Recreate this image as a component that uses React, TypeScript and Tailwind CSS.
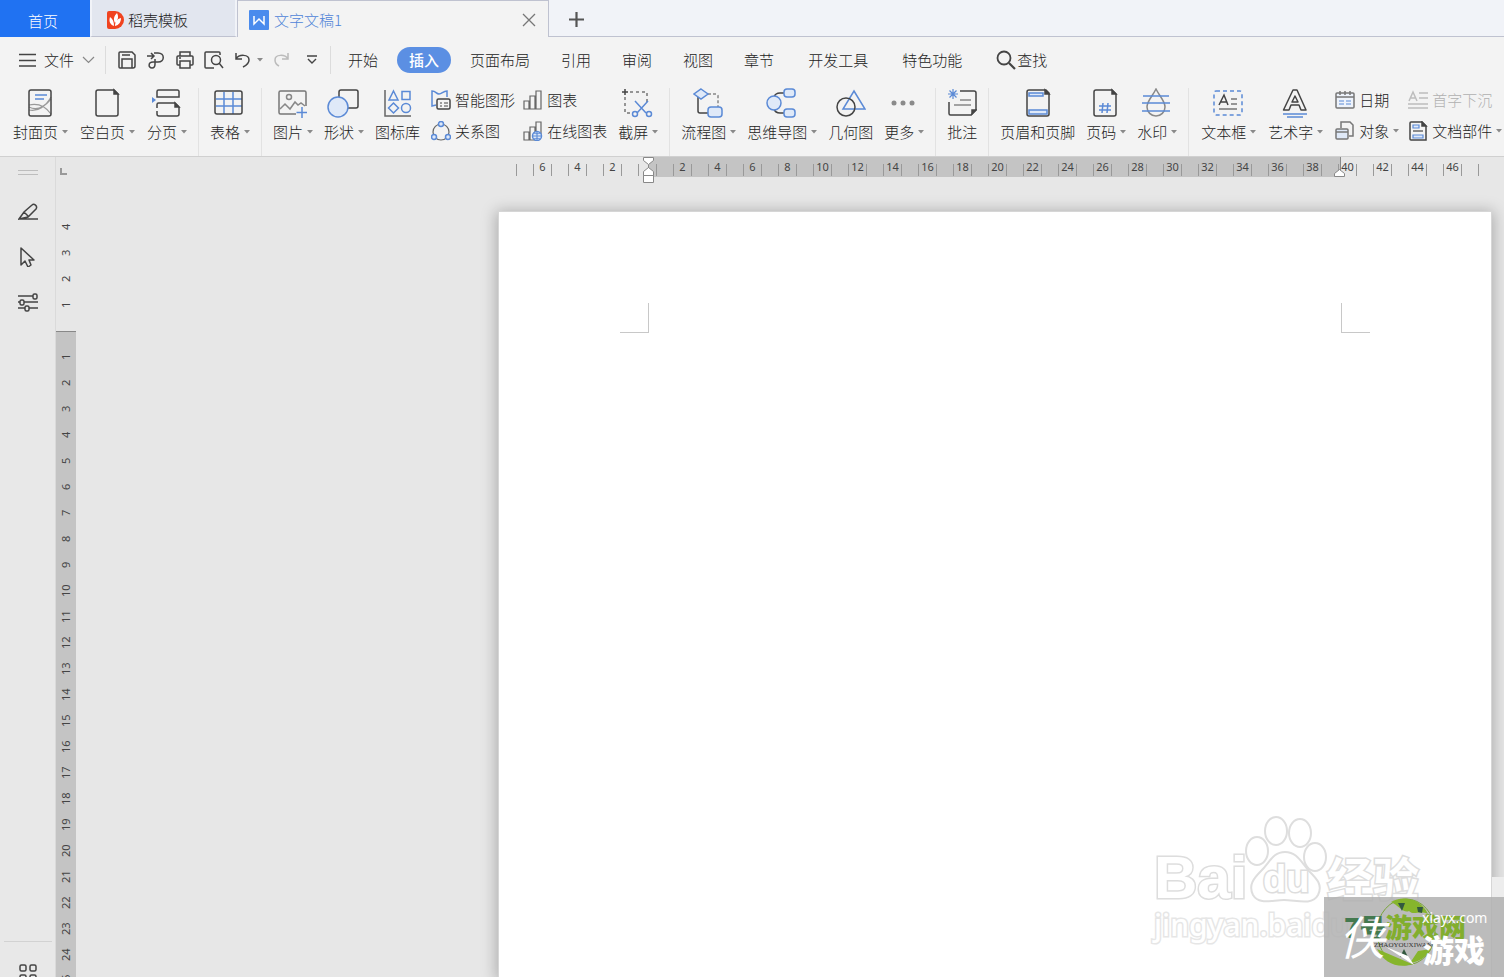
import type { ReactNode } from "react";

const DARK = "#444444";
const BLUE = "#5b8ad6";
const PALE = "#dfe9f8";

type IconProps = { w: number; h: number; children: ReactNode };

const Icon = ({ w, h, children }: IconProps) => (
  <svg
    width={w}
    height={h}
    viewBox={`0 0 ${w} ${h}`}
    fill="none"
    stroke={DARK}
    strokeWidth="1.5"
    className="shrink-0"
    aria-hidden="true"
  >
    {children}
  </svg>
);

const Caret = () => (
  <svg width="6" height="4" viewBox="0 0 6 4" className="shrink-0" aria-hidden="true">
    <path d="M0 0h6L3 3.5z" fill="#8a8a8a" />
  </svg>
);

const icons = {
  cover: (
    <Icon w={30} h={30}>
      <path d="M4 17c9-2 17 2 22 9M4 22c9 2 17-4 22-13M4 19c9 5 17-2 22-8" stroke="#999" strokeWidth="1.2" />
      <rect x="4" y="2" width="22" height="26" rx="2" />
      <path d="M10 7h12M10 11h9" stroke={BLUE} />
    </Icon>
  ),
  blank: (
    <Icon w={30} h={30}>
      <path d="M6 2h16l4 4v20a2 2 0 0 1-2 2H6a2 2 0 0 1-2-2V4a2 2 0 0 1 2-2z" />
      <path d="M22 2l4 4h-4z" fill={DARK} />
    </Icon>
  ),
  pageBreak: (
    <Icon w={30} h={30}>
      <path d="M6 9V3.500a1.500 1.500 0 0 1 1.500-1.500h19a1.500 1.500 0 0 1 1.500 1.500V9z" />
      <path d="M6 20v-3.500a1.500 1.500 0 0 1 1.500-1.500H24l4 4M6 23v3a2 2 0 0 0 2 2h18a2 2 0 0 0 2-2v-7" />
      <path d="M24 15l4 4h-4z" fill={DARK} />
      <path d="M1 9l4 3-4 3z" fill={BLUE} stroke="none" />
    </Icon>
  ),
  table: (
    <Icon w={30} h={30}>
      <path d="M10 4v22M19 4v22M2 11h26M2 18h26" stroke={BLUE} />
      <rect x="1" y="3" width="27" height="23" rx="2" />
    </Icon>
  ),
  picture: (
    <Icon w={30} h={30}>
      <path d="M19 26H3.500A1.500 1.500 0 0 1 2 24.500V4.500A1.500 1.500 0 0 1 3.500 3h24A1.500 1.500 0 0 1 29 4.500V18" stroke="#777" />
      <circle cx="12" cy="9" r="2.500" stroke="#888" />
      <path d="M3 21l5-5 5 5 5-7 3 3 3-2 4 3" stroke="#888" />
      <path d="M25 19v11M19.500 24.500h11" stroke={BLUE} />
    </Icon>
  ),
  shapes: (
    <Icon w={32} h={30}>
      <rect x="12" y="2" width="19" height="18" rx="2" />
      <circle cx="11" cy="19" r="10" fill={PALE} stroke={BLUE} />
    </Icon>
  ),
  iconLib: (
    <Icon w={30} h={30}>
      <path d="M2 2v26h26" stroke="#666" />
      <path d="M10.500 3l4.500 9H6zM19 3.500h8v8h-8zM10.500 15l5 5-5 5-5-5z" stroke={BLUE} />
      <circle cx="23" cy="20" r="4.500" stroke={BLUE} />
    </Icon>
  ),
  screenshot: (
    <Icon w={32} h={30}>
      <path d="M4 1v6M1 4h6" />
      <path d="M9 4h17v11M4 9v16h7" stroke="#777" strokeDasharray="3 3" />
      <path d="M14 13l11 12M27 13L16 25" stroke={BLUE} />
      <circle cx="14" cy="26" r="2.500" stroke={BLUE} />
      <circle cx="28" cy="26" r="2.500" stroke={BLUE} />
    </Icon>
  ),
  flow: (
    <Icon w={30} h={30}>
      <path d="M5 9v14a2 2 0 0 0 2 2h9" />
      <path d="M15 6h8a2 2 0 0 1 2 2v11" stroke="#888" strokeDasharray="3 2" />
      <path d="M8 1l7 5-7 5-7-5z" fill={PALE} stroke={BLUE} />
      <rect x="15" y="19" width="14" height="10" rx="3" fill={PALE} stroke={BLUE} />
    </Icon>
  ),
  mind: (
    <Icon w={32} h={30}>
      <path d="M9 9c1-3 3-4 6-4h5M9 21c1 3 3 4 6 4h5" />
      <circle cx="9" cy="15" r="7" fill={PALE} stroke={BLUE} />
      <rect x="19" y="1" width="11" height="8" rx="3" fill={PALE} stroke={BLUE} />
      <rect x="19" y="21" width="11" height="8" rx="3" fill={PALE} stroke={BLUE} />
    </Icon>
  ),
  geometry: (
    <Icon w={30} h={30}>
      <path d="M18 3l11 18H7z" stroke={BLUE} />
      <circle cx="10" cy="19" r="9" />
    </Icon>
  ),
  more: (
    <Icon w={30} h={30}>
      <g fill="#8a8a8a" stroke="none">
        <circle cx="6" cy="15" r="2.500" />
        <circle cx="15" cy="15" r="2.500" />
        <circle cx="24" cy="15" r="2.500" />
      </g>
    </Icon>
  ),
  comment: (
    <Icon w={30} h={30}>
      <path d="M13 3h14a2 2 0 0 1 2 2v17l-5 5H3.500A1.500 1.500 0 0 1 2 25.500V14" />
      <path d="M25 26v-4h4z" fill={DARK} />
      <path d="M13 12h11M7 17h17" stroke="#888" />
      <path d="M6 1v10M1 6h10M2.500 2.500l7 7M9.500 2.500l-7 7" stroke={BLUE} strokeWidth="1.200" />
    </Icon>
  ),
  headerFooter: (
    <Icon w={30} h={30}>
      <path d="M6 2h17l3 3v21a2 2 0 0 1-2 2H6a2 2 0 0 1-2-2V4a2 2 0 0 1 2-2z" />
      <path d="M22 2l4 4h-4z" fill={DARK} />
      <rect x="6" y="5" width="14" height="3" fill={PALE} stroke={BLUE} />
      <rect x="6" y="22" width="18" height="4" fill={PALE} stroke={BLUE} />
    </Icon>
  ),
  pageNumber: (
    <Icon w={30} h={30}>
      <path d="M6 2h16l4 4v20a2 2 0 0 1-2 2H6a2 2 0 0 1-2-2V4a2 2 0 0 1 2-2z" />
      <path d="M22 2l4 4h-4z" fill={DARK} />
      <path d="M13 15l-1 10M18 15l-1 10M9 18h12M9 22h12" stroke={BLUE} />
    </Icon>
  ),
  watermark: (
    <Icon w={30} h={30}>
      <path d="M15 1c4 8 9 12 9 18a9 9 0 0 1-18 0C6 13 11 9 15 1z" stroke="#888" />
      <path d="M2 8h26M1 15h28M1 23h28" stroke={BLUE} />
    </Icon>
  ),
  textBox: (
    <Icon w={30} h={30}>
      <rect x="1" y="3" width="28" height="24" rx="2" stroke={BLUE} strokeDasharray="4 3" />
      <path d="M6 17l5-10 4 10M8 14h6" />
      <path d="M18 11h6M18 16h6M6 21h18" stroke="#777" />
    </Icon>
  ),
  wordArt: (
    <Icon w={30} h={30}>
      <path d="M13 2h4l9 20h-5l-2-5h-8l-2 5H3.500zM15 8l-3 6h6z" strokeLinejoin="round" />
      <path d="M3 26h24M7 29h16" stroke={BLUE} />
    </Icon>
  ),
  smart: (
    <Icon w={20} h={20}>
      <path d="M5 15l-4 1V1c4 0 4 3 7 3s4-3 8-3v6" stroke={BLUE} />
      <rect x="6" y="9" width="13" height="10" rx="1.500" fill="#f3f3f3" />
      <path d="M9 13h2M13 13h4M9 16h2M13 16h4" strokeWidth="1" />
    </Icon>
  ),
  relation: (
    <Icon w={20} h={20}>
      <circle cx="10" cy="11" r="8" stroke="#666" strokeWidth="1.200" />
      <g fill={PALE} stroke={BLUE}>
        <circle cx="10" cy="3" r="2.500" />
        <circle cx="3" cy="16" r="2.500" />
        <circle cx="17" cy="16" r="2.500" />
      </g>
    </Icon>
  ),
  chart: (
    <Icon w={20} h={20}>
      <path d="M1 11h5v8H1zM7 6h5v13H7zM13 1h5v18h-5z" stroke="#666" strokeWidth="1.200" />
    </Icon>
  ),
  onlineChart: (
    <Icon w={20} h={20}>
      <path d="M1 11h5v8H1zM7 6h5v13H7zM13 1h5v12h-5z" stroke="#666" strokeWidth="1.200" />
      <circle cx="14" cy="15" r="4.500" fill={PALE} stroke={BLUE} />
      <path d="M14 10v10M9.500 15h9M11 12c2 1 4 1 6 0M11 18c2-1 4-1 6 0" stroke={BLUE} strokeWidth="1" />
    </Icon>
  ),
  date: (
    <Icon w={20} h={20}>
      <rect x="1" y="3" width="18" height="15" rx="1" stroke="#777" fill="#eef3fb" />
      <path d="M1 7h18M5 1v4M10 1v4M15 1v4" stroke="#777" />
      <path d="M4 11h5M11 11h5M4 14h5M11 14h5" stroke={BLUE} strokeWidth="1" />
    </Icon>
  ),
  object: (
    <Icon w={20} h={20}>
      <path d="M6 7V1h9l3 3v11h-4" stroke="#777" />
      <rect x="1" y="8" width="12" height="10" rx="1" fill={PALE} stroke="#777" />
      <path d="M1 11h12" stroke="#777" />
    </Icon>
  ),
  dropCap: (
    <Icon w={20} h={20}>
      <path d="M1 11L5 2l4 9M2 8h6M11 3h9M11 8h9M0 14h20M0 18h20" stroke="#bdbdbd" />
    </Icon>
  ),
  docParts: (
    <Icon w={20} h={20}>
      <path d="M3 1h11l4 4v14H3a1 1 0 0 1-1-1V2a1 1 0 0 1 1-1z" />
      <path d="M14 1l4 4h-4z" fill={DARK} />
      <path d="M5 4h6v3H5zM5 14h10v3H5z" stroke={BLUE} fill={PALE} strokeWidth="1.200" />
      <path d="M5 10h10" stroke="#666" />
    </Icon>
  ),
};

type Item = { label: string; icon: ReactNode; caret?: boolean; muted?: boolean };

const BigButton = ({ label, icon, caret }: Item) => (
  <button type="button" className="flex shrink-0 flex-col items-start gap-1">
    <span className={caret ? "flex w-full justify-center pr-[2px]" : "flex w-full justify-center"}>{icon}</span>
    <span className="flex items-center gap-1 leading-5">
      {label}
      {caret && <Caret />}
    </span>
  </button>
);

const SmallButton = ({ label, icon, caret, muted }: Item) => (
  <button
    type="button"
    className={
      muted
        ? "flex shrink-0 items-center gap-1 leading-5 text-[#b0b0b0]"
        : "flex shrink-0 items-center gap-1 leading-5"
    }
  >
    {icon}
    {label}
    {caret && <Caret />}
  </button>
);

const SmallColumn = ({ items }: { items: Item[] }) => (
  <div className="flex shrink-0 flex-col items-start gap-[11px] pt-[2px]">
    {items.map((item) => (
      <SmallButton key={item.label} {...item} />
    ))}
  </div>
);

const Group = ({ children, wide, last }: { children: ReactNode; wide?: boolean; last?: boolean }) => (
  <div
    className={
      last
        ? "flex shrink-0 items-start gap-3 pl-3"
        : wide
          ? "flex shrink-0 items-start gap-3 border-r border-[#e2e2e2] px-[11px]"
          : "flex shrink-0 items-start gap-[11px] border-r border-[#e2e2e2] px-[11px]"
    }
  >
    {children}
  </div>
);

const TabBar = () => (
  <header className="flex h-[37px] shrink-0 bg-[#f1f3f8]">
    <a href="#home" className="flex w-[90px] shrink-0 items-center justify-center bg-[#2072f2] pt-1 pr-1 text-white">
      首页
    </a>
    <a
      href="#templates"
      className="flex w-[147px] shrink-0 items-center gap-1 border-x-2 border-b border-x-[#f1f3f8] border-b-[#bfc2d0] bg-[#e2e6ef] pt-1 pl-[15px]"
    >
      <svg width="17" height="18" viewBox="0 0 17 18" aria-hidden="true">
        <path d="M0 2a2 2 0 0 1 2-2h6a9 9 0 0 1 0 18H2a2 2 0 0 1-2-2z" fill="#f0431f" />
        <path d="M7 15C2 13 2 9 3 6c3 2 4 5 4 9zM8 12c-2-4-1-7 2-10 2 4 1 7-2 10zM8 15c0-4 2-7 6-8 0 4-2 7-6 8z" fill="#fff" />
      </svg>
      稻壳模板
    </a>
    <div className="flex w-[312px] shrink-0 items-center border-x border-t border-[#bfc2d0] bg-[#f3f3f3] pt-[2px] pr-3 pl-[11px] font-normal text-[#4f84d8]">
      <svg width="20" height="20" viewBox="0 0 20 20" aria-hidden="true">
        <rect width="20" height="20" rx="1" fill="#4a8bed" />
        <path d="M5 6v8l5-5 5 5V6" fill="none" stroke="#fff" strokeWidth="1.500" />
      </svg>
      <span className="ml-[5px] flex-1 font-light">文字文稿1</span>
      <button type="button" aria-label="关闭">
        <svg width="14" height="14" viewBox="0 0 14 14" stroke="#777" strokeWidth="1.300" aria-hidden="true">
          <path d="M1 1l12 12M13 1L1 13" />
        </svg>
      </button>
    </div>
    <div className="flex flex-1 items-center border-b border-[#bfc2d0] pt-[2px] pl-5">
      <button type="button" aria-label="新建">
        <svg width="15" height="15" viewBox="0 0 15 15" stroke="#555" strokeWidth="2.200" aria-hidden="true">
          <path d="M7.500 0v15M0 7.500h15" />
        </svg>
      </button>
    </div>
  </header>
);

const quickActions = [
  {
    label: "保存",
    icon: (
      <Icon w={20} h={20}>
        <path d="M3 2h12l3 3v11a2 2 0 0 1-2 2H3a1 1 0 0 1-1-1V3a1 1 0 0 1 1-1z" />
        <path d="M5 18V9h10v9M5 5h8" />
      </Icon>
    ),
  },
  {
    label: "输出",
    icon: (
      <Icon w={20} h={20}>
        <path d="M1 6h7M5 3l3 3-3 3" />
        <path d="M8 3h4c7 0 7 9 0 9H7c-5 0-5 6-1 6 2 0 3-1 3-4V9" />
      </Icon>
    ),
  },
  {
    label: "打印",
    icon: (
      <Icon w={20} h={20}>
        <path d="M5 6V2h10v4M5 15H3a1 1 0 0 1-1-1V7a1 1 0 0 1 1-1h14a1 1 0 0 1 1 1v7a1 1 0 0 1-1 1h-2" />
        <path d="M5 11h10v7H5zM4 8h2" />
      </Icon>
    ),
  },
  {
    label: "打印预览",
    icon: (
      <Icon w={20} h={20}>
        <path d="M16 5V3a1 1 0 0 0-1-1H2a1 1 0 0 0-1 1v14a1 1 0 0 0 1 1h8" />
        <circle cx="12" cy="10" r="4.500" />
        <path d="M15 13l4 5" />
      </Icon>
    ),
  },
];

const MenuBar = () => (
  <nav className="flex h-[46px] shrink-0 items-center bg-[#f3f3f3] pl-[19px]">
    <button type="button" className="flex shrink-0 items-center gap-2">
      <Icon w={17} h={14}>
        <path d="M0 1.500h17M0 7.500h17M0 13h17" strokeWidth="1.300" />
      </Icon>
      文件
      <Icon w={13} h={8}>
        <path d="M1 1l5.500 5.500L12 1" stroke="#888" strokeWidth="1.200" />
      </Icon>
    </button>
    <div className="mx-[10px] h-7 w-px shrink-0 bg-[#dcdcdc]" />
    <div className="flex shrink-0 items-center gap-[9px] pl-px">
      {quickActions.map((action) => (
        <button key={action.label} type="button" aria-label={action.label}>
          {action.icon}
        </button>
      ))}
      <button type="button" aria-label="撤销" className="flex items-center gap-[6px]">
        <Icon w={18} h={18}>
          <path d="M3 2v6h6M3 8c3-5 13-5 13 1 0 3-2 5-6 7" />
        </Icon>
        <Caret />
      </button>
      <button type="button" aria-label="恢复">
        <Icon w={18} h={18}>
          <path d="M16 2v6h-6M16 8C13 3 3 3 3 9c0 3 2 5 4 6" stroke="#bbb" />
        </Icon>
      </button>
      <button type="button" aria-label="自定义" className="pl-2">
        <Icon w={10} h={10}>
          <path d="M0 1h10M1 4l4 4 4-4" strokeWidth="1.400" />
        </Icon>
      </button>
    </div>
    <div className="mr-[5px] ml-[13px] h-7 w-px shrink-0 bg-[#dcdcdc]" />
    <div className="flex shrink-0 items-center gap-[7px]">
      {["开始", "插入", "页面布局", "引用", "审阅", "视图", "章节"].map((name) =>
        name === "插入" ? (
          <button key={name} type="button" className="h-[26px] rounded-full bg-[#5b8fe3] px-3 font-medium text-white">
            {name}
          </button>
        ) : (
          <button key={name} type="button" className="h-[26px] px-3">
            {name}
          </button>
        ),
      )}
    </div>
    <div className="ml-[10px] flex shrink-0 items-center gap-[10px]">
      {["开发工具", "特色功能"].map((name) => (
        <button key={name} type="button" className="h-[26px] px-3">
          {name}
        </button>
      ))}
      <button type="button" className="flex items-center pl-3">
        <Icon w={21} h={20}>
          <circle cx="8" cy="8" r="6.500" strokeWidth="1.800" />
          <path d="M13 13l6 6" strokeWidth="2.200" />
        </Icon>
        查找
      </button>
    </div>
  </nav>
);

const Ribbon = () => (
  <section className="flex h-[74px] shrink-0 items-stretch overflow-hidden border-b border-[#d0d0d0] bg-[#f3f3f3] pt-[5px] pl-[2px]">
    <Group wide>
      <BigButton label="封面页" icon={icons.cover} caret />
      <BigButton label="空白页" icon={icons.blank} caret />
      <BigButton label="分页" icon={icons.pageBreak} caret />
    </Group>
    <Group>
      <BigButton label="表格" icon={icons.table} caret />
    </Group>
    <Group>
      <BigButton label="图片" icon={icons.picture} caret />
      <BigButton label="形状" icon={icons.shapes} caret />
      <BigButton label="图标库" icon={icons.iconLib} />
      <div className="flex gap-2">
        <SmallColumn
          items={[
            { label: "智能图形", icon: icons.smart },
            { label: "关系图", icon: icons.relation },
          ]}
        />
        <SmallColumn
          items={[
            { label: "图表", icon: icons.chart },
            { label: "在线图表", icon: icons.onlineChart },
          ]}
        />
      </div>
      <BigButton label="截屏" icon={icons.screenshot} caret />
    </Group>
    <Group>
      <BigButton label="流程图" icon={icons.flow} caret />
      <BigButton label="思维导图" icon={icons.mind} caret />
      <BigButton label="几何图" icon={icons.geometry} />
      <BigButton label="更多" icon={icons.more} caret />
    </Group>
    <Group>
      <BigButton label="批注" icon={icons.comment} />
    </Group>
    <Group>
      <BigButton label="页眉和页脚" icon={icons.headerFooter} />
      <BigButton label="页码" icon={icons.pageNumber} caret />
      <BigButton label="水印" icon={icons.watermark} caret />
    </Group>
    <Group last>
      <BigButton label="文本框" icon={icons.textBox} caret />
      <BigButton label="艺术字" icon={icons.wordArt} caret />
      <div className="flex gap-[9px]">
        <SmallColumn
          items={[
            { label: "日期", icon: icons.date },
            { label: "对象", icon: icons.object, caret: true },
          ]}
        />
        <SmallColumn
          items={[
            { label: "首字下沉", icon: icons.dropCap, muted: true },
            { label: "文档部件", icon: icons.docParts, caret: true },
          ]}
        />
      </div>
    </Group>
  </section>
);

const SideBar = () => (
  <aside className="flex w-14 shrink-0 flex-col items-center border-r border-[#dadada] bg-[#e8e8e8] pt-[13px]">
    <div className="h-[5px] w-5 border-y border-[#bdbdbd]" />
    <div className="mt-[27px] flex flex-col gap-[25px]">
      <button type="button" aria-label="样式">
        <Icon w={20} h={20}>
          <path d="M1 17h19M1 17l5-7 8-7c2-2 6 1 4 4l-8 8zM6 10l4 4" />
        </Icon>
      </button>
      <button type="button" aria-label="选择">
        <Icon w={20} h={20}>
          <path d="M3 1v17l4-4 3 6 3-2-2-5h5z" strokeLinejoin="round" />
        </Icon>
      </button>
      <button type="button" aria-label="设置">
        <Icon w={20} h={20}>
          <path d="M0 4h15M0 10h2M6 10h14M0 16h7M11 16h9" />
          <rect x="15" y="2" width="4" height="5" rx="1.500" />
          <rect x="2" y="8" width="4" height="5" rx="1.500" />
          <rect x="7" y="14" width="4" height="5" rx="1.500" />
        </Icon>
      </button>
    </div>
    <div className="mt-auto w-12 shrink-0 border-t border-[#d2d2d2]" />
    <button type="button" aria-label="更多面板" className="mt-[21px] h-[14px] shrink-0 overflow-hidden">
      <Icon w={20} h={20}>
        <rect x="2" y="2" width="6" height="6" rx="1.500" />
        <rect x="12" y="2" width="6" height="6" rx="1.500" />
        <rect x="2" y="12" width="6" height="6" rx="1.500" />
        <rect x="12" y="12" width="6" height="6" rx="1.500" />
      </Icon>
    </button>
  </aside>
);

const RulerMark = ({ value }: { value: number }) => (
  <span className="flex h-[26px] w-5 shrink-0 rotate-180 items-center justify-center [writing-mode:vertical-rl]">
    {value}
  </span>
);

const VerticalRuler = () => (
  <div className="flex w-5 shrink-0 flex-col overflow-hidden font-['Noto_Sans'] text-[11px] leading-5 font-normal text-[#444]">
    <div className="h-[57px] shrink-0 pt-[11px] pl-1">
      <div className="h-[7px] w-[7px] border-b-2 border-l-2 border-[#999]" />
    </div>
    {[4, 3, 2, 1].map((n) => (
      <RulerMark key={n} value={n} />
    ))}
    <div className="mt-[13px] flex-1 overflow-hidden border-t border-[#888] bg-[#c4c4c4] pt-3">
      {Array.from({ length: 25 }, (_, i) => (
        <RulerMark key={i} value={i + 1} />
      ))}
    </div>
  </div>
);

// one cell per two characters, from 8 left of the margin to 48 right of it
const rulerCells = Array.from({ length: 29 }, (_, i) => i * 2 - 8);

const tickClass = (n: number) => {
  if (n === -8) return "absolute top-[7px] left-2 h-3 w-[19px] border-r border-[#999]";
  if (n === 48) return "absolute top-[7px] left-2 h-3 w-[19px] border-l border-[#999]";
  return "absolute top-[7px] left-2 h-3 w-[19px] border-x border-[#999]";
};

const HorizontalRuler = () => (
  <div className="relative -mr-px flex h-5 shrink-0 justify-end font-['Noto_Sans'] text-[11px] leading-5 font-normal text-[#444]">
    <div className="absolute top-0 right-[164px] h-5 w-[693px] border-r border-[#888] bg-[#c4c4c4]" />
    {rulerCells.map((n) => (
      <div key={n} className="relative flex h-5 w-[35px] shrink-0 items-center justify-center">
        <span className={tickClass(n)} />
        <span className="relative">{n === 0 || n === -8 || n === 48 ? "" : Math.abs(n)}</span>
        {n === 0 && (
          <svg width="12" height="26" viewBox="0 0 12 26" className="absolute top-0 left-[13px]" fill="#fff" stroke="#888" aria-hidden="true">
            <path d="M.5.500h10v3l-5 4-5-4zM5.500 8v3M.5 18.500v-4l5-4 5 4v4zM.5 18.500h10v7H.5z" />
          </svg>
        )}
        {n === 40 && (
          <svg width="12" height="8" viewBox="0 0 12 8" className="absolute bottom-0 left-1" fill="#fff" stroke="#888" aria-hidden="true">
            <path d="M.5 7.500v-3l5-4 5 4v3z" />
          </svg>
        )}
      </div>
    ))}
  </div>
);

const outline = "text-white [-webkit-text-stroke:3px_#dddddd] [paint-order:stroke]";

const Watermark = () => (
  <div className="absolute right-[84px] bottom-7 h-[134px] w-[266px]" aria-hidden="true">
    <span className={`absolute top-[30px] left-0 font-['Liberation_Sans'] text-[60px] leading-[66px] font-bold ${outline}`}>
      Bai
    </span>
    <svg width="84" height="90" viewBox="0 0 84 90" className="absolute top-0 left-[90px]" fill="#fff" stroke="#dedede" strokeWidth="2">
      <ellipse cx="13" cy="36" rx="11" ry="14" />
      <ellipse cx="32" cy="16" rx="11" ry="14" />
      <ellipse cx="56" cy="18" rx="11" ry="14" />
      <ellipse cx="71" cy="42" rx="11" ry="14" />
      <path d="M41 37c12 0 16 10 24 19 8 8 14 14 9 24-6 11-22 5-34 5s-25 5-31-5c-5-10 1-17 8-24 9-9 12-19 24-19z" />
    </svg>
    <span className={`absolute top-[40px] left-[109px] font-['Liberation_Sans'] text-[38px] leading-[48px] font-bold ${outline}`}>
      du
    </span>
    <span className={`absolute top-[36px] left-[173px] text-[46px] leading-[50px] font-bold whitespace-nowrap ${outline}`}>
      经验
    </span>
    <span className="absolute top-[92px] left-0 font-['Noto_Sans'] text-[30px] leading-9 font-medium whitespace-nowrap text-white [-webkit-text-stroke:3px_#e6e6e6] [paint-order:stroke]">
      jingyan.baidu
    </span>
  </div>
);

const SiteBadge = () => (
  <div className="absolute right-0 bottom-0 h-20 w-[180px] overflow-hidden bg-[#b0b0b0]/85" aria-hidden="true">
    <svg width="64" height="72" viewBox="0 0 64 72" className="absolute top-0 left-[50px]">
      <ellipse cx="32" cy="35" rx="29" ry="33" fill="none" stroke="#7aa53a" />
      <path d="M17 5c11-7 30-4 37 12-9-4-14 2-19-3-5 3-11-6-18-9z" fill="#86b52c" />
      <path d="M3 52l35 15c-14 5-28-1-35-15zM36 66c9-1 16-6 21-14L44 54z" fill="#86b52c" />
      <path d="M24 6h7l-3 8zM43 10h6l-1 6-4-1zM26 60l4-8 4 8z" fill="#33583f" />
      <path d="M12 50l28 18-6-9z" fill="#fff" />
    </svg>
    <span className="absolute top-[14px] left-5 text-[26px] leading-8 font-black whitespace-nowrap text-[#44794f]">7号</span>
    <span className="absolute top-[14px] left-[61px] text-[27px] leading-8 font-black whitespace-nowrap text-[#82ae2e]">游戏网</span>
    <span className="absolute top-[13px] left-[15px] text-[46px] leading-[50px] font-normal text-white italic">侠</span>
    <span className="absolute top-[42px] left-[50px] font-['Liberation_Serif'] text-[7px] leading-3 font-normal text-[#333]">ZHAOYOUXIWANG</span>
    <span className="absolute top-[12px] left-[98px] font-['Noto_Sans'] text-[14px] leading-[18px] font-normal text-white">xiayx.com</span>
    <span className="absolute top-[34px] left-[99px] text-[31px] leading-9 font-black whitespace-nowrap text-white">游戏</span>
  </div>
);

const Editor = () => (
  <main className="flex min-w-0 flex-1 flex-col overflow-hidden">
    <HorizontalRuler />
    <div className="mt-[34px] flex min-h-0 flex-1 justify-end">
      <article className="flex w-[994px] shrink-0 items-start justify-between border border-b-0 border-[#d6d6d6] bg-white px-[121px] pt-[91px] shadow-[0_2px_14px_2px_rgba(0,0,0,0.25)]">
        <div className="h-[30px] w-[29px] border-r border-b border-[#c8c8c8]" />
        <div className="h-[30px] w-[29px] border-b border-l border-[#c8c8c8]" />
      </article>
      <div className="flex w-3 shrink-0 flex-col justify-end">
        <div className="relative h-[100px] bg-[#ededed]" />
      </div>
    </div>
  </main>
);

export default function App() {
  return (
    <div className="relative flex h-screen flex-col overflow-hidden bg-[#e7e7e7] font-['Noto_Sans_CJK_SC',sans-serif] text-[15px] leading-5 font-light text-[#222]">
      <TabBar />
      <MenuBar />
      <Ribbon />
      <div className="flex min-h-0 flex-1">
        <SideBar />
        <VerticalRuler />
        <Editor />
      </div>
      <Watermark />
      <SiteBadge />
    </div>
  );
}
